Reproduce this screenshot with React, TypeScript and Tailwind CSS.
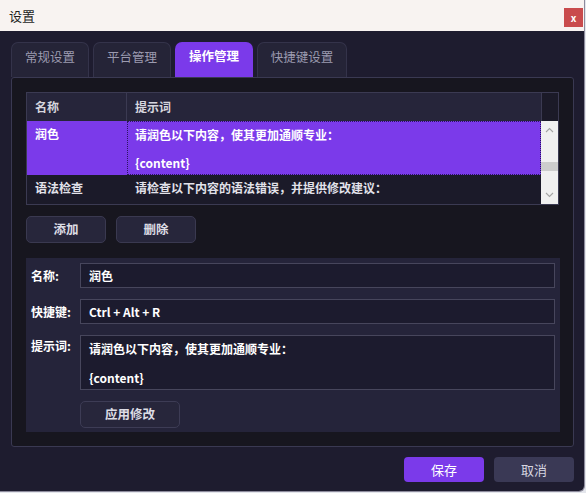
import React, { useState } from 'react';

const FONT = { fontFamily: '"Noto Sans CJK SC", "Noto Sans", sans-serif' };

interface Action {
  name: string;
  prompt: string;
  hotkey: string;
}

const ACTIONS: Action[] = [
  { name: '润色', prompt: '请润色以下内容，使其更加通顺专业：\n\n{content}', hotkey: 'Ctrl + Alt + R' },
  { name: '语法检查', prompt: '请检查以下内容的语法错误，并提供修改建议：', hotkey: 'Ctrl + Alt + G' },
];

const TABS = ['常规设置', '平台管理', '操作管理', '快捷键设置'];

const Chevron: React.FC<{ up?: boolean }> = ({ up }) => (
  <svg width="9" height="6" viewBox="0 0 9 6" className="text-[#a5a5a5]">
    <path
      d={up ? 'M1 5 L4.5 1.5 L8 5' : 'M1 1 L4.5 4.5 L8 1'}
      fill="none"
      stroke="currentColor"
      strokeWidth="1.1"
    />
  </svg>
);

const App: React.FC = () => {
  const [activeTab, setActiveTab] = useState(2);
  const [selected, setSelected] = useState(0);
  const current = ACTIONS[selected];

  return (
    <div className="w-[586px] h-[493px] bg-[#e4e6ec] overflow-hidden" style={FONT}>
      <div className="w-[585px] h-[492px] flex flex-col border-r border-b border-[#8d8b9c] rounded-br-md overflow-hidden">
        {/* 标题栏 */}
        <div className="h-[31px] shrink-0 bg-[#f8f3f1] flex justify-between pl-[9px] pr-[1px]">
          <span className="text-[13px] text-[#1e1e1e] leading-none pt-[9px]">设置</span>
          <button className="mt-[8px] w-[19px] h-[19px] bg-[#c94b4d] text-white text-[10px] font-bold leading-none flex items-center justify-center">
            x
          </button>
        </div>

        {/* 主体 */}
        <div className="flex-1 bg-[#1e1c2f] pl-[11px] pr-[10px] pt-[11px] flex flex-col">
          {/* 标签页 */}
          <div className="flex gap-[4px] h-[35px] shrink-0">
            {TABS.map((tab, i) => (
              <button
                key={tab}
                onClick={() => setActiveTab(i)}
                className={`h-[35px] pb-[6px] rounded-t-[7px] text-[12.5px] leading-none flex items-center justify-center ${
                  i === 3 ? 'w-[90px]' : 'w-[78px]'
                } ${
                  activeTab === i
                    ? 'bg-[#7b3aea] text-white font-bold'
                    : 'bg-[#252437] border border-b-0 border-[#34334a] text-[#9c9bb0]'
                }`}
              >
                {tab}
              </button>
            ))}
          </div>

          {/* 操作管理面板 */}
          <div className="h-[370px] shrink-0 border border-[#3a3952] rounded-[3px] bg-[#17161f] pl-[14px] pr-[14px] pt-[14px]">
            {/* 操作列表 */}
            <div className="w-[533px] h-[113px] border border-[#3b3a52] flex flex-col text-[12px] font-bold">
              <div className="h-[28px] shrink-0 flex">
                <div className="w-[100px] bg-[#26253a] border-r border-[#3b3a52] pl-[8px] flex items-center text-[#d6d6de]">
                  名称
                </div>
                <div className="flex-1 bg-[#26253a] pl-[8px] flex items-center text-[#d6d6de]">提示词</div>
                <div className="w-[17px] bg-[#1b1a28] border-l border-[#3b3a52]" />
              </div>
              <div className="flex flex-1 min-h-0">
                <div className="flex-1 flex flex-col">
                  {ACTIONS.map((a, i) => (
                    <div
                      key={a.name}
                      onClick={() => setSelected(i)}
                      className={`flex ${i === 0 ? 'h-[54px]' : 'flex-1'} ${
                        selected === i ? 'bg-[#7b3aea] text-white' : 'bg-[#1b1a29] text-[#e2e2ea]'
                      }`}
                    >
                      <div className="w-[100px] pl-[8px] pt-[6px] leading-[14px]">{a.name}</div>
                      <div
                        className={`flex-1 pt-[6px] leading-[14px] whitespace-pre-wrap ${
                          selected === i ? 'pl-[7px] border border-dotted border-[#2c1560]' : 'pl-[8px]'
                        }`}
                      >
                        {a.prompt}
                      </div>
                    </div>
                  ))}
                </div>
                {/* 滚动条 */}
                <div className="w-[17px] bg-[#f0f0f0] flex flex-col items-center justify-between py-[6px] relative">
                  <Chevron up />
                  <div className="absolute left-0 right-0 top-[41px] h-[9px] bg-[#cdcdcd]" />
                  <Chevron />
                </div>
              </div>
            </div>

            {/* 添加 / 删除 */}
            <div className="flex gap-[10px] mt-[11px]">
              {['添加', '删除'].map((t) => (
                <button
                  key={t}
                  className="w-[80px] h-[27px] rounded-[5px] bg-[#27263b] border border-[#3a3950] text-[12.5px] font-bold text-[#dcdce4] leading-none"
                >
                  {t}
                </button>
              ))}
            </div>

            {/* 编辑区 */}
            <div className="mt-[15px] w-[534px] h-[174px] bg-[#25243a] px-[5px] pt-[5px] flex flex-col gap-[11px] text-[12px] font-bold">
              <div className="flex items-center">
                <span className="w-[49px] text-white">名称:</span>
                <div className="flex-1 h-[25px] bg-[#1c1b2e] border border-[#47465c] pl-[8px] flex items-center text-white">
                  {current.name}
                </div>
              </div>
              <div className="flex items-center">
                <span className="w-[49px] text-white">快捷键:</span>
                <div className="flex-1 h-[25px] bg-[#1c1b2e] border border-[#47465c] pl-[8px] flex items-center text-white">
                  {current.hotkey}
                </div>
              </div>
              <div className="flex items-start">
                <span className="w-[49px] text-white leading-[14px] pt-[4px]">提示词:</span>
                <div className="flex-1 h-[55px] bg-[#1c1b2e] border border-[#47465c] pl-[8px] pt-[6px] leading-[14.5px] whitespace-pre-wrap text-white overflow-hidden">
                  {current.prompt}
                </div>
              </div>
              <div className="pl-[49px]">
                <button className="w-[100px] h-[27px] rounded-[5px] bg-[#27263b] border border-[#3d3c55] text-[12.5px] font-bold text-[#dcdce4] leading-none">
                  应用修改
                </button>
              </div>
            </div>
          </div>

          {/* 底部按钮 */}
          <div className="flex justify-end gap-[10px] mt-[10px]">
            <button className="w-[80px] h-[25px] rounded-[4px] bg-[#7b3aea] text-white text-[13px] leading-none">
              保存
            </button>
            <button className="w-[80px] h-[25px] rounded-[4px] bg-[#3a3955] text-[#d6d6e0] text-[13px] leading-none">
              取消
            </button>
          </div>
        </div>
      </div>
    </div>
  );
};

export default App;
